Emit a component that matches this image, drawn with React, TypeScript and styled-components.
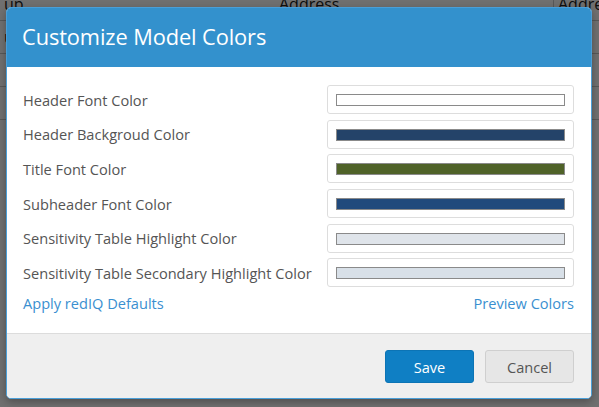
import React from "react";
import styled, { createGlobalStyle } from "styled-components";

const Global = createGlobalStyle`
  html, body { margin: 0; padding: 0; }
  body { font-family: "Open Sans", "Liberation Sans", sans-serif; background: #fff; }
  * { box-sizing: border-box; }
`;

const Page = styled.div`
  position: relative;
  width: 599px;
  height: 407px;
  overflow: hidden;
  background: #fff;
`;

const BgTable = styled.div`
  margin-top: -12px;
  display: flex;
  flex-direction: column;
`;

const BgRow = styled.div`
  display: grid;
  grid-template-columns: 275px 278px 1fr;
  height: 33px;
  border-bottom: 1px solid #c9c9c9;
  font-size: 16px;
  color: #222;
  align-items: center;
`;

const BgCell = styled.div<{ $sep?: boolean }>`
  height: 100%;
  display: flex;
  align-items: center;
  padding-left: 4px;
  border-left: ${(p) => (p.$sep ? "1px solid #c9c9c9" : "none")};
  white-space: nowrap;
  overflow: hidden;
`;

const Overlay = styled.div`
  position: absolute;
  inset: 0;
  background: rgba(0, 0, 0, 0.56);
`;

const Modal = styled.div`
  position: absolute;
  left: 6px;
  top: 7px;
  width: 586px;
  border: 1px solid #4a9fd8;
  border-radius: 5px;
  overflow: hidden;
  background: #fff;
  box-shadow: 0 3px 9px rgba(0, 0, 0, 0.3);
`;

const Header = styled.div`
  background: #3391cd;
  height: 59px;
  display: flex;
  align-items: center;
  padding: 0 0 3px 15px;
`;

const Title = styled.h1`
  margin: 0;
  font-size: 21.8px;
  font-weight: 400;
  color: #fff;
  letter-spacing: -0.1px;
`;

const Body = styled.div`
  padding: 18px 17px 19px 16px;
  display: flex;
  flex-direction: column;
`;

const Rows = styled.div`
  display: grid;
  grid-template-columns: 1fr 247px;
  row-gap: 5.7px;
  align-items: center;
`;

const Label = styled.div`
  font-size: 14.6px;
  color: #555;
  line-height: 20px;
  white-space: nowrap;
`;

const SwatchBox = styled.div`
  height: 29px;
  border: 1px solid #ddd;
  border-radius: 3px;
  padding: 8px 8px 7px 8px;
  background: #fff;
`;

const Swatch = styled.div<{ $color: string }>`
  height: 12px;
  border: 1px solid #8a8a8a;
  background: ${(p) => p.$color};
`;

const LinkRow = styled.div`
  display: flex;
  justify-content: space-between;
  margin-top: 6px;
  margin-bottom: 1px;
`;

const Link = styled.a`
  font-size: 14.6px;
  color: #3a8fd0;
  text-decoration: none;
  line-height: 20px;
  cursor: pointer;
`;

const Footer = styled.div`
  background: #efefef;
  border-top: 1px solid #dcdcdc;
  padding: 16px 17px 15px;
  display: flex;
  justify-content: flex-end;
  gap: 11px;
`;

const Button = styled.button<{ $primary?: boolean }>`
  width: 89px;
  height: 33px;
  border-radius: 3px;
  font-family: "Open Sans", "Liberation Sans", sans-serif;
  font-size: 14.6px;
  cursor: pointer;
  border: 1px solid ${(p) => (p.$primary ? "#0c74b5" : "#cfcfcf")};
  background: ${(p) => (p.$primary ? "#0f7fc4" : "#e6e6e6")};
  color: ${(p) => (p.$primary ? "#fff" : "#555")};
`;

const fields = [
  { label: "Header Font Color", color: "#ffffff" },
  { label: "Header Backgroud Color", color: "#244369" },
  { label: "Title Font Color", color: "#4f6228" },
  { label: "Subheader Font Color", color: "#214a7c" },
  { label: "Sensitivity Table Highlight Color", color: "#dfe4ea" },
  { label: "Sensitivity Table Secondary Highlight Color", color: "#d8e0e8" },
];

export default function App() {
  return (
    <Page>
      <Global />
      <BgTable>
        <BgRow>
          <BgCell>up</BgCell>
          <BgCell>Address</BgCell>
          <BgCell $sep>Address 1</BgCell>
        </BgRow>
        <BgRow>
          <BgCell>u</BgCell>
          <BgCell />
          <BgCell $sep />
        </BgRow>
        <BgRow>
          <BgCell />
          <BgCell />
          <BgCell $sep />
        </BgRow>
        <BgRow>
          <BgCell />
          <BgCell />
          <BgCell $sep />
        </BgRow>
      </BgTable>
      <Overlay />
      <Modal>
        <Header>
          <Title>Customize Model Colors</Title>
        </Header>
        <Body>
          <Rows>
            {fields.map((f) => (
              <React.Fragment key={f.label}>
                <Label>{f.label}</Label>
                <SwatchBox>
                  <Swatch $color={f.color} />
                </SwatchBox>
              </React.Fragment>
            ))}
          </Rows>
          <LinkRow>
            <Link>Apply redIQ Defaults</Link>
            <Link>Preview Colors</Link>
          </LinkRow>
        </Body>
        <Footer>
          <Button $primary>Save</Button>
          <Button>Cancel</Button>
        </Footer>
      </Modal>
    </Page>
  );
}
